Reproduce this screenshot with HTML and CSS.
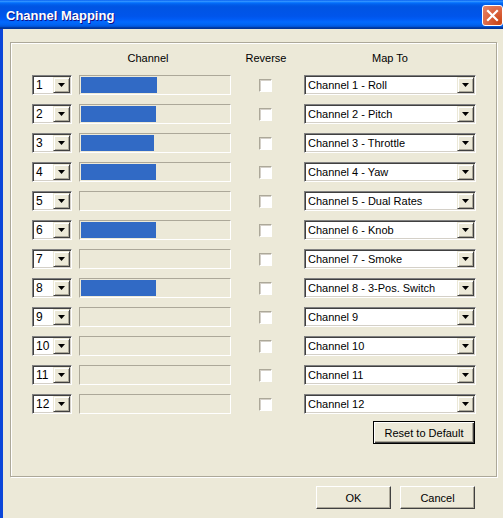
FILE: index.html
```html
<!DOCTYPE html>
<html>
<head>
<meta charset="utf-8">
<link rel="stylesheet" href="styles.css">
</head>
<body>
<div class="window">
  <div class="titlebar">
    <span class="title">Channel Mapping</span>
    <span class="close"><svg width="13" height="13" viewBox="0 0 13 13"><path d="M2 2 L11 11 M11 2 L2 11" stroke="#fff" stroke-width="2.2" stroke-linecap="square"/></svg></span>
  </div>
  <div class="client">
    <div class="group">
      <div class="grid">
        <div class="hdr hdr-channel">Channel</div>
        <div class="hdr hdr-rev">Reverse</div>
        <div class="hdr hdr-map">Map To</div>

        <div class="combo small"><span class="val">1</span><span class="drop"><svg width="7" height="4" viewBox="0 0 7 4"><path d="M0 0H7L3.5 4Z" fill="#000"/></svg></span></div>
        <div class="track"><div class="fill" style="width:76px"></div></div>
        <div class="check"></div>
        <div class="combo wide"><span class="val">Channel 1 - Roll</span><span class="drop"><svg width="7" height="4" viewBox="0 0 7 4"><path d="M0 0H7L3.5 4Z" fill="#000"/></svg></span></div>

        <div class="combo small"><span class="val">2</span><span class="drop"><svg width="7" height="4" viewBox="0 0 7 4"><path d="M0 0H7L3.5 4Z" fill="#000"/></svg></span></div>
        <div class="track"><div class="fill" style="width:75px"></div></div>
        <div class="check"></div>
        <div class="combo wide"><span class="val">Channel 2 - Pitch</span><span class="drop"><svg width="7" height="4" viewBox="0 0 7 4"><path d="M0 0H7L3.5 4Z" fill="#000"/></svg></span></div>

        <div class="combo small"><span class="val">3</span><span class="drop"><svg width="7" height="4" viewBox="0 0 7 4"><path d="M0 0H7L3.5 4Z" fill="#000"/></svg></span></div>
        <div class="track"><div class="fill" style="width:73px"></div></div>
        <div class="check"></div>
        <div class="combo wide"><span class="val">Channel 3 - Throttle</span><span class="drop"><svg width="7" height="4" viewBox="0 0 7 4"><path d="M0 0H7L3.5 4Z" fill="#000"/></svg></span></div>

        <div class="combo small"><span class="val">4</span><span class="drop"><svg width="7" height="4" viewBox="0 0 7 4"><path d="M0 0H7L3.5 4Z" fill="#000"/></svg></span></div>
        <div class="track"><div class="fill" style="width:75px"></div></div>
        <div class="check"></div>
        <div class="combo wide"><span class="val">Channel 4 - Yaw</span><span class="drop"><svg width="7" height="4" viewBox="0 0 7 4"><path d="M0 0H7L3.5 4Z" fill="#000"/></svg></span></div>

        <div class="combo small"><span class="val">5</span><span class="drop"><svg width="7" height="4" viewBox="0 0 7 4"><path d="M0 0H7L3.5 4Z" fill="#000"/></svg></span></div>
        <div class="track"></div>
        <div class="check"></div>
        <div class="combo wide"><span class="val">Channel 5 - Dual Rates</span><span class="drop"><svg width="7" height="4" viewBox="0 0 7 4"><path d="M0 0H7L3.5 4Z" fill="#000"/></svg></span></div>

        <div class="combo small"><span class="val">6</span><span class="drop"><svg width="7" height="4" viewBox="0 0 7 4"><path d="M0 0H7L3.5 4Z" fill="#000"/></svg></span></div>
        <div class="track"><div class="fill" style="width:75px"></div></div>
        <div class="check"></div>
        <div class="combo wide"><span class="val">Channel 6 - Knob</span><span class="drop"><svg width="7" height="4" viewBox="0 0 7 4"><path d="M0 0H7L3.5 4Z" fill="#000"/></svg></span></div>

        <div class="combo small"><span class="val">7</span><span class="drop"><svg width="7" height="4" viewBox="0 0 7 4"><path d="M0 0H7L3.5 4Z" fill="#000"/></svg></span></div>
        <div class="track"></div>
        <div class="check"></div>
        <div class="combo wide"><span class="val">Channel 7 - Smoke</span><span class="drop"><svg width="7" height="4" viewBox="0 0 7 4"><path d="M0 0H7L3.5 4Z" fill="#000"/></svg></span></div>

        <div class="combo small"><span class="val">8</span><span class="drop"><svg width="7" height="4" viewBox="0 0 7 4"><path d="M0 0H7L3.5 4Z" fill="#000"/></svg></span></div>
        <div class="track"><div class="fill" style="width:75px"></div></div>
        <div class="check"></div>
        <div class="combo wide"><span class="val">Channel 8 - 3-Pos. Switch</span><span class="drop"><svg width="7" height="4" viewBox="0 0 7 4"><path d="M0 0H7L3.5 4Z" fill="#000"/></svg></span></div>

        <div class="combo small"><span class="val">9</span><span class="drop"><svg width="7" height="4" viewBox="0 0 7 4"><path d="M0 0H7L3.5 4Z" fill="#000"/></svg></span></div>
        <div class="track"></div>
        <div class="check"></div>
        <div class="combo wide"><span class="val">Channel 9</span><span class="drop"><svg width="7" height="4" viewBox="0 0 7 4"><path d="M0 0H7L3.5 4Z" fill="#000"/></svg></span></div>

        <div class="combo small"><span class="val">10</span><span class="drop"><svg width="7" height="4" viewBox="0 0 7 4"><path d="M0 0H7L3.5 4Z" fill="#000"/></svg></span></div>
        <div class="track"></div>
        <div class="check"></div>
        <div class="combo wide"><span class="val">Channel 10</span><span class="drop"><svg width="7" height="4" viewBox="0 0 7 4"><path d="M0 0H7L3.5 4Z" fill="#000"/></svg></span></div>

        <div class="combo small"><span class="val">11</span><span class="drop"><svg width="7" height="4" viewBox="0 0 7 4"><path d="M0 0H7L3.5 4Z" fill="#000"/></svg></span></div>
        <div class="track"></div>
        <div class="check"></div>
        <div class="combo wide"><span class="val">Channel 11</span><span class="drop"><svg width="7" height="4" viewBox="0 0 7 4"><path d="M0 0H7L3.5 4Z" fill="#000"/></svg></span></div>

        <div class="combo small"><span class="val">12</span><span class="drop"><svg width="7" height="4" viewBox="0 0 7 4"><path d="M0 0H7L3.5 4Z" fill="#000"/></svg></span></div>
        <div class="track"></div>
        <div class="check"></div>
        <div class="combo wide"><span class="val">Channel 12</span><span class="drop"><svg width="7" height="4" viewBox="0 0 7 4"><path d="M0 0H7L3.5 4Z" fill="#000"/></svg></span></div>

        <button class="btn btn-default reset">Reset to Default</button>
      </div>
    </div>
    <div class="buttons">
      <button class="btn">OK</button>
      <button class="btn">Cancel</button>
    </div>
  </div>
</div>
</body>
</html>
```

FILE: styles.css
```css
html, body {
  margin: 0;
  padding: 0;
  background: #ECE9D8;
}
body {
  font-family: "Liberation Sans", Arial, sans-serif;
  font-size: 11px;
  color: #000;
}
.window {
  width: 503px;
  height: 518px;
  overflow: hidden;
  display: flex;
  flex-direction: column;
  background: #ECE9D8;
}
.titlebar {
  height: 29px;
  flex: none;
  display: flex;
  align-items: center;
  justify-content: space-between;
  background: linear-gradient(to bottom, #0058EE 0%, #3593FF 4%, #288EFF 6%, #127DFF 8%, #036FFC 10%, #0262EE 14%, #0057E5 20%, #0054E3 24%, #0055EB 56%, #005BF5 66%, #026AFE 76%, #0062EF 86%, #0052D6 92%, #0040AB 94%, #003092 100%);
  padding-left: 6px;
  box-sizing: border-box;
}
.title {
  color: #fff;
  font-weight: bold;
  font-size: 13px;
  text-shadow: 1px 1px 0 #0F1089;
  margin-top: 2px;
}
.close {
  width: 21px;
  height: 21px;
  box-sizing: border-box;
  border: 1px solid #fff;
  border-radius: 3px;
  background: radial-gradient(circle at 85% 85%, #CC4615 0%, #DC6744 55%, #E5876D 100%);
  display: flex;
  align-items: center;
  justify-content: center;
  margin-right: 0;
  margin-top: 1px;
}
.client {
  flex: 1;
  border-left: 3px solid #0B46D9;
  padding-left: 7px;
  padding-top: 13px;
}
.group {
  width: 487px;
  height: 435px;
  box-sizing: border-box;
  border: 1px solid #ACA899;
  box-shadow: 1px 1px 0 #fff, inset 1px 1px 0 #fff;
  padding: 9px 0 0 21px;
}
.grid {
  display: grid;
  grid-template-columns: 47px 180px 45px 172px;
  grid-template-rows: 14px;
  grid-auto-rows: 20px;
  row-gap: 9px;
  align-items: center;
}
.hdr {
  grid-row: 1;
  height: 13px;
  line-height: 13px;
  display: flex;
  justify-content: center;
  white-space: nowrap;
  align-self: start;
}
.hdr-channel {
  grid-column: 1 / 3;
  padding-left: 5px;
}
.hdr-rev {
  grid-column: 3;
  padding-right: 31px;
}
.hdr-map {
  grid-column: 4;
}
.combo {
  height: 20px;
  box-sizing: border-box;
  background: #fff;
  border: 1px solid;
  border-color: #808080 #fff #fff #808080;
  box-shadow: inset 1px 1px 0 #404040, inset -1px -1px 0 #D4D0C8;
  display: flex;
  align-items: stretch;
  padding: 1px;
}
.combo.small {
  width: 40px;
}
.combo.wide {
  width: 172px;
}
.val {
  flex: 1;
  display: flex;
  align-items: center;
  padding-left: 2px;
  white-space: nowrap;
  overflow: hidden;
  font-size: 11px;
}
.small .val {
  font-size: 12px;
}
.drop {
  width: 17px;
  flex: none;
  box-sizing: border-box;
  background: #ECE9D8;
  border: 1px solid;
  border-color: #ECE9D8 #404040 #404040 #ECE9D8;
  box-shadow: inset 1px 1px 0 #fff, inset -1px -1px 0 #ACA899;
  display: flex;
  align-items: center;
  justify-content: center;
}
.track {
  width: 152px;
  height: 20px;
  box-sizing: border-box;
  border: 1px solid;
  border-color: #ACA899 #fff #fff #ACA899;
  padding: 1px;
}
.fill {
  height: 100%;
  background: #316AC5;
}
.check {
  width: 13px;
  height: 13px;
  box-sizing: border-box;
  background: #fff;
  border: 1px solid;
  border-color: #ACA899 #fff #fff #ACA899;
  box-shadow: inset 1px 1px 0 #D4D0C8;
}
.btn {
  font-family: "Liberation Sans", Arial, sans-serif;
  font-size: 11px;
  color: #000;
  background: #ECE9D8;
  height: 23px;
  width: 75px;
  box-sizing: border-box;
  border: 1px solid;
  border-color: #fff #404040 #404040 #fff;
  box-shadow: inset -1px -1px 0 #ACA899;
  padding: 0;
  margin: 0;
}
.btn-default {
  border: 1px solid #000;
  box-shadow: inset 1px 1px 0 #fff, inset -1px -1px 0 #404040, inset -2px -2px 0 #ACA899;
}
.reset {
  grid-column: 4;
  justify-self: end;
  width: 102px;
  margin-right: 1px;
  margin-top: -1px;
  height: 23px;
}
.buttons {
  display: flex;
  justify-content: flex-end;
  gap: 9px;
  padding-right: 28px;
  margin-top: 9px;
}
```
